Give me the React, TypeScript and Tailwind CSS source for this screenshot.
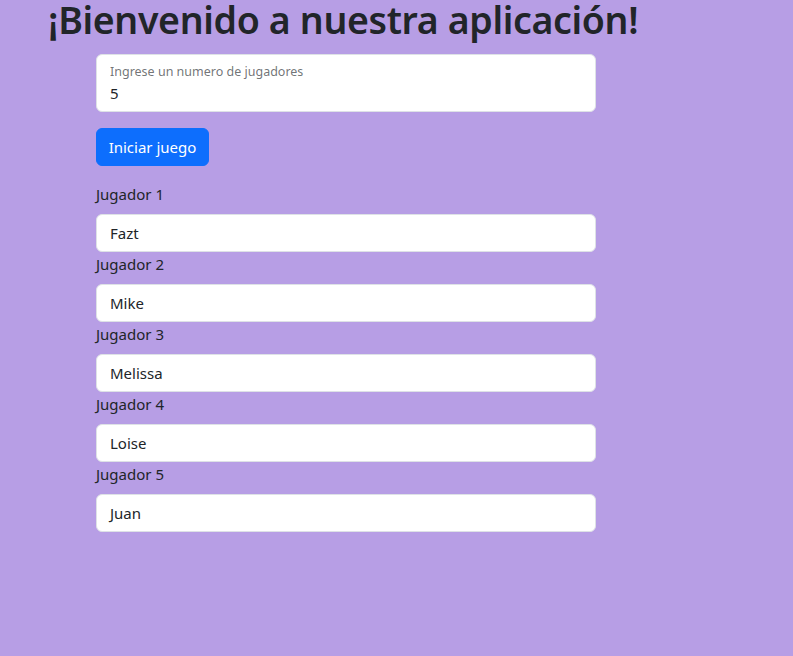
import React from "react";

const players = ["Fazt", "Mike", "Melissa", "Loise", "Juan"];

export default function App() {
  return (
    <div
      className="min-h-[656px] w-full bg-[#b79ee5] text-[#212529]"
      style={{ fontFamily: '"Noto Sans", "Open Sans", sans-serif' }}
    >
      <h1 className="pl-[48px] text-[37.5px] font-semibold leading-[40px] mb-[14px] tracking-[-0.35px] whitespace-nowrap">
        ¡Bienvenido a nuestra aplicación!
      </h1>
      <div className="pl-[96px]">
        <div className="relative h-[58px] w-[500px] rounded-[6px] border border-[#dee2e6] bg-white mb-[16px]">
          <div className="absolute left-[13px] top-[7px] text-[12.5px] leading-[20px] text-[#212529a6]">
            Ingrese un numero de jugadores
          </div>
          <div className="absolute left-[13px] top-[26px] text-[15px] leading-[24px]">5</div>
        </div>
        <button className="h-[38px] w-[113px] rounded-[6px] border border-[#0d6efd] bg-[#0d6efd] text-[15px] text-white leading-[24px] mb-[16px]">
          Iniciar juego
        </button>
        {players.map((p, i) => (
          <div key={p}>
            <div className="text-[15px] leading-[24px] mb-[8px]">Jugador {i + 1}</div>
            <div className="flex h-[38px] w-[500px] items-center rounded-[6px] border border-[#dee2e6] bg-white px-[13px] text-[15px]">
              {p}
            </div>
          </div>
        ))}
      </div>
    </div>
  );
}
